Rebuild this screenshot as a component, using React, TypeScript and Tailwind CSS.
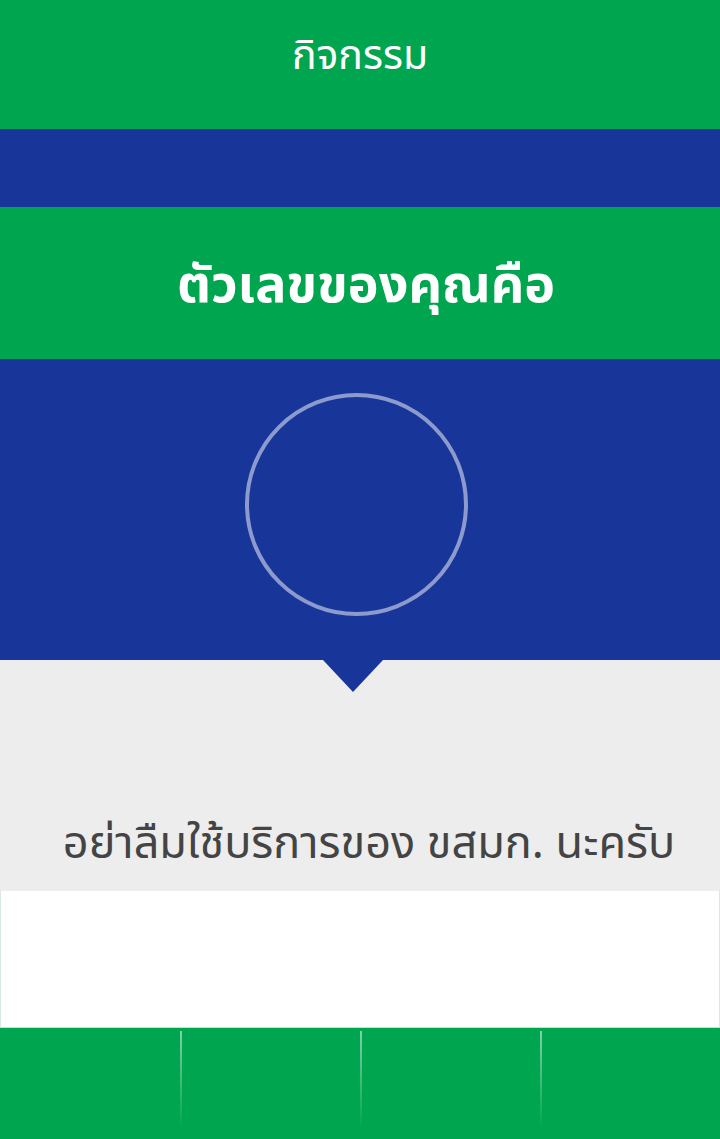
import React from "react"

const thai = { fontFamily: '"Noto Sans Thai", "Noto Sans", "DejaVu Sans", sans-serif' }

const App: React.FC = () => {
    return (
        <div className="w-[720px] h-[1139px] flex flex-col bg-white overflow-hidden" style={thai}>
            {/* header */}
            <div className="h-[129px] bg-[#00a54f] flex items-center justify-center">
                <h1 className="text-white text-[41px] leading-none -mt-[16px]">กิจกรรม</h1>
            </div>

            <div className="h-[78px] bg-[#18359a]"></div>

            {/* title */}
            <div className="h-[152px] bg-[#00a54f] flex items-center justify-center">
                <h2 className="text-white text-[52px] font-bold leading-none pl-[12px] mt-[6px]">ตัวเลขของคุณคือ</h2>
            </div>

            {/* number circle */}
            <div className="h-[301px] bg-[#18359a] flex items-center justify-center">
                <div className="w-[223px] h-[223px] rounded-full border-4 border-white/50 -mt-[11px] -ml-[8px]"></div>
            </div>

            {/* message */}
            <div className="relative h-[231px] bg-[#ededed] flex items-end justify-center pb-[24px]">
                <div className="absolute top-0 left-[323px] w-0 h-0 border-l-[30px] border-r-[30px] border-t-[32px] border-l-transparent border-r-transparent border-t-[#18359a]"></div>
                <p className="text-[#444] text-[45px] leading-none pl-[18px]">อย่าลืมใช้บริการของ ขสมก. นะครับ</p>
            </div>

            <div className="h-[137px] bg-white border-x border-[#d8ebe0] border-b border-b-[#c9dccf]"></div>

            {/* footer */}
            <div className="flex-1 bg-[#00a54f] grid grid-cols-4 pt-[3px] pb-[9px]">
                {[0, 1, 2, 3].map((i) => (
                    <div key={i} className="relative">
                        {i > 0 && (
                            <div className="absolute left-0 top-0 bottom-0 w-[2px] bg-gradient-to-b from-white/50 to-transparent"></div>
                        )}
                    </div>
                ))}
            </div>
        </div>
    )
}

export default App
